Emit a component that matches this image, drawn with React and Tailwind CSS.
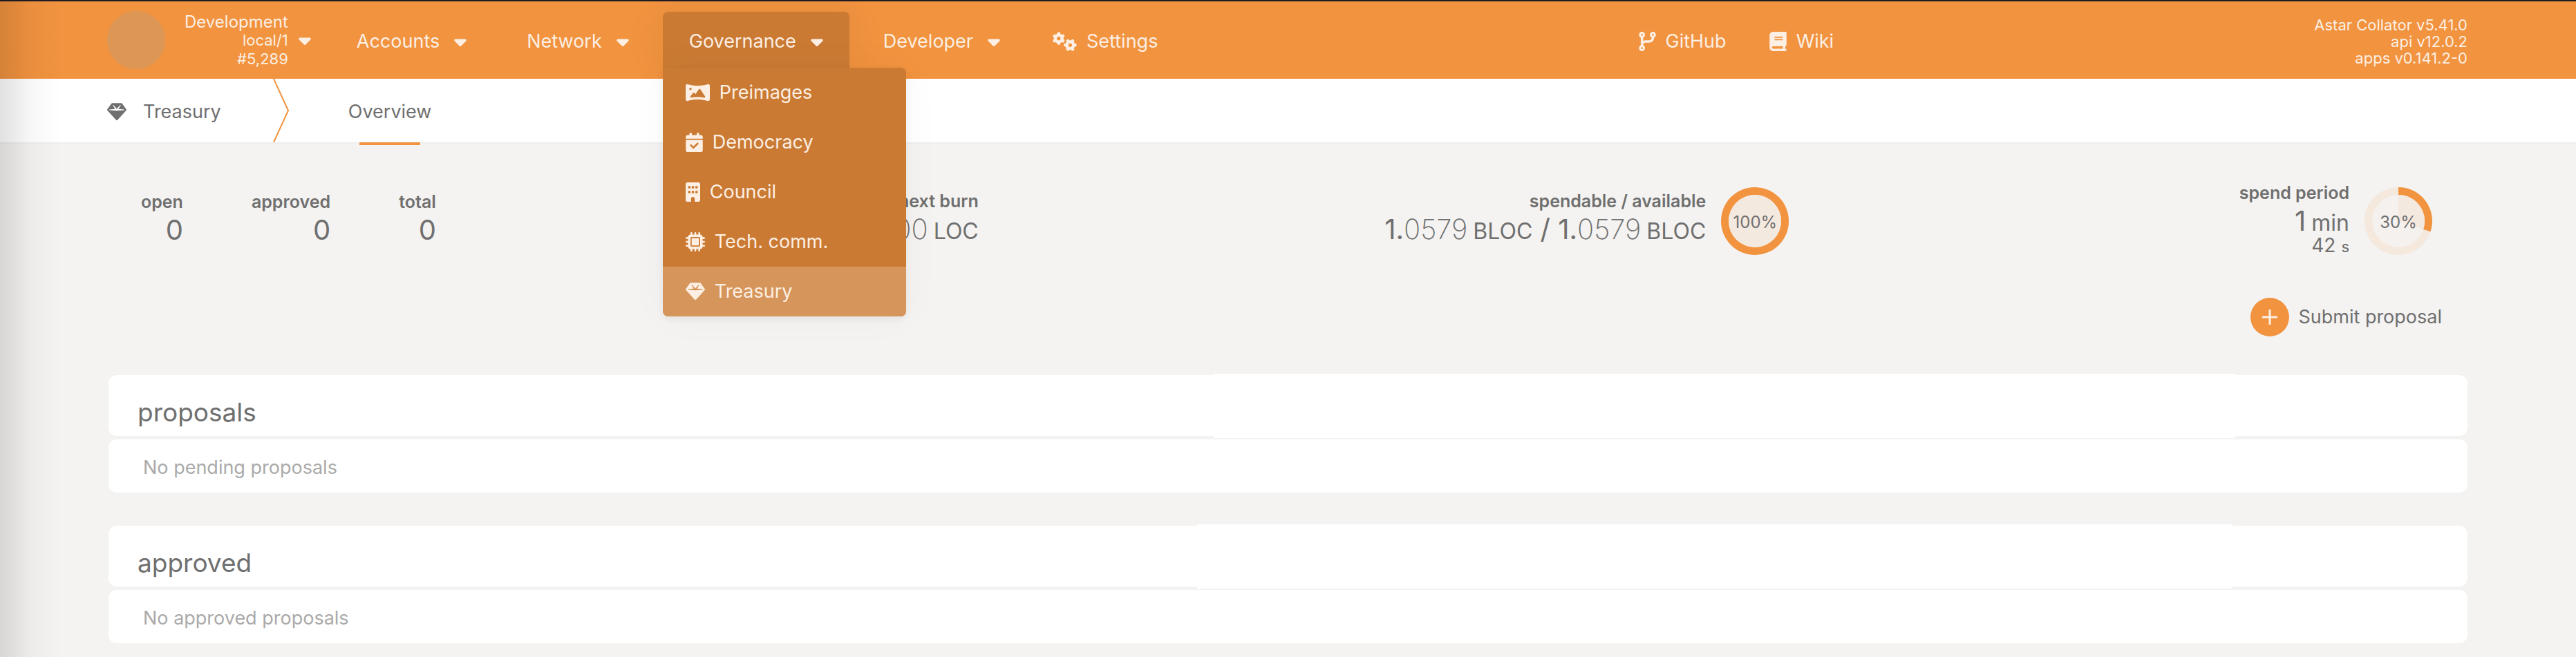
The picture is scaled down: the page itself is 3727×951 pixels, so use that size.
import React, { useState } from "react";
import {
  FaBook,
  FaBuilding,
  FaCalendarCheck,
  FaCaretDown,
  FaCodeBranch,
  FaGears,
  FaGem,
  FaMicrochip,
  FaPanorama,
} from "react-icons/fa6";

const governanceItems = [
  { name: "Preimages", Icon: FaPanorama, size: "h-7 w-[35px]" },
  { name: "Democracy", Icon: FaCalendarCheck, size: "h-7 w-[25px]" },
  { name: "Council", Icon: FaBuilding, size: "h-7 w-[21px]" },
  { name: "Tech. comm.", Icon: FaMicrochip, size: "h-7 w-7" },
  { name: "Treasury", Icon: FaGem, size: "h-7 w-7" },
];

const counts = [
  { label: "open", value: 0 },
  { label: "approved", value: 0 },
  { label: "total", value: 0 },
];

function MenuButton({ name, active, onClick }) {
  return (
    <button
      onClick={onClick}
      className={`flex h-[82px] items-center gap-[21px] rounded-t-lg px-[38px] pt-[3px] ${
        active ? "bg-[#ca7a33] shadow-[0_0_64px_rgba(0,0,0,0.06)]" : ""
      }`}
    >
      <span>{name}</span>
      <FaCaretDown className="h-7 w-[18px]" />
    </button>
  );
}

function Dropdown({ items, selected }) {
  return (
    <ul className="absolute left-0 top-[81px] z-20 w-[352px] overflow-hidden rounded-b-lg rounded-tr-lg bg-[#ca7a33] shadow-[0_0_64px_rgba(0,0,0,0.03),0_4px_12px_rgba(0,0,0,0.06)]">
      {items.map(({ name, Icon, size }) => (
        <li key={name}>
          <a
            href="#"
            className={`flex h-[72px] items-center gap-[14px] px-[33px] ${
              name === selected ? "bg-[#d5955b]" : ""
            }`}
          >
            <Icon className={size} />
            <span>{name}</span>
          </a>
        </li>
      ))}
    </ul>
  );
}

function Stat({ label, children }) {
  return (
    <div className="text-right">
      <h2 className="text-[25px] leading-[26px] font-semibold">{label}</h2>
      <div className="text-[40px] leading-[56px]">{children}</div>
    </div>
  );
}

function Balance({ whole, decimals, unit }) {
  return (
    <>
      {whole}.<span className="font-extralight">{decimals}</span>
      <span className="ml-2 text-[32px]">{unit}</span>
    </>
  );
}

// pie in the middle, ring around it, both filled to the same percentage
function Progress({ value }) {
  const angle = (value / 100) * 2 * Math.PI;
  const x = 49 + 49 * Math.sin(angle);
  const y = 49 - 49 * Math.cos(angle);
  const slice = `M49 49V0A49 49 0 ${value > 50 ? 1 : 0} 1 ${x} ${y}Z`;
  const full = value >= 100;

  return (
    <div className="relative flex h-[98px] w-[98px] items-center justify-center">
      <svg viewBox="0 0 98 98" className="absolute inset-0 h-full w-full">
        <circle cx="49" cy="49" r="49" fill="#f5e8dd" />
        {full ? (
          <circle cx="49" cy="49" r="49" fill="#f1933f" />
        ) : (
          <path d={slice} fill="#f1933f" />
        )}
        <circle cx="49" cy="49" r="38" fill="#f5f1ee" />
        {full ? (
          <circle cx="49" cy="49" r="38" fill="#f4e9df" />
        ) : (
          <g transform="translate(49 49) scale(0.776) translate(-49 -49)">
            <path d={slice} fill="#f4e9df" />
          </g>
        )}
      </svg>
      <span className="relative pt-1 text-2xl leading-7">{value}%</span>
    </div>
  );
}

function ProposalTable({ title, empty, columns }) {
  return (
    <table className="w-full table-fixed border-separate border-spacing-x-0 border-spacing-y-[5px]">
      <colgroup>
        {columns.map((width, index) => (
          <col key={index} style={{ width }} />
        ))}
      </colgroup>
      <thead>
        <tr>
          <th className="h-[88px] rounded-l-xl bg-white pt-5 pl-[42px] text-left text-[37px] leading-[48px] font-normal">
            <h1>{title}</h1>
          </th>
          <th className="bg-white shadow-[0_-2px_0_#fff,0_3px_0_#fff]" />
          <th className="rounded-r-xl bg-white" />
        </tr>
      </thead>
      <tbody>
        <tr>
          <td
            colSpan={3}
            className="h-[77px] rounded-xl bg-white pt-1 pl-[50px] leading-8 text-[#aaaaaa]"
          >
            {empty}
          </td>
        </tr>
      </tbody>
    </table>
  );
}

export default function App() {
  const [open, setOpen] = useState("Governance");

  const toggle = (name) => setOpen(open === name ? null : name);

  return (
    <div className="relative min-h-screen bg-[#f4f3f1] font-['Inter','Liberation_Sans',sans-serif] text-[27px] leading-8 text-[#6f6f6f]">
      {/* Menu bar */}
      <header className="flex h-[114px] justify-between border-t-2 border-[#1f1c22] bg-[#f1933f] px-[155px] text-[#fdefe3]">
        <div className="flex">
          <button className="flex items-center text-right">
            <span className="h-[84px] w-[84px] rounded-full bg-[#dc9757]" />
            <span className="ml-7 text-[22px] leading-[27px]">
              <span className="block text-2xl leading-[27px]">Development</span>
              <span className="block">local/1</span>
              <span className="block">#5,289</span>
            </span>
            <FaCaretDown className="ml-[15px] h-7 w-[18px]" />
          </button>
          <nav className="flex pt-[15px] pl-7">
            <ul className="flex gap-[11px]">
              {["Accounts", "Network", "Governance", "Developer"].map((name) => (
                <li key={name} className="relative">
                  <MenuButton
                    name={name}
                    active={open === name}
                    onClick={() => toggle(name)}
                  />
                  {name === "Governance" && open === name && (
                    <Dropdown items={governanceItems} selected="Treasury" />
                  )}
                </li>
              ))}
            </ul>
            <a href="#" className="flex h-[82px] items-center gap-[14px] pt-[3px] pl-[38px]">
              <FaGears className="h-7 w-[35px]" />
              Settings
            </a>
          </nav>
        </div>
        <div className="flex items-center gap-[62px] pt-[3px]">
          <a href="#" className="flex items-center gap-[14px]">
            <FaCodeBranch className="h-7 w-[25px]" />
            GitHub
          </a>
          <a href="#" className="flex items-center gap-[14px]">
            <FaBook className="h-7 w-[25px]" />
            Wiki
          </a>
        </div>
        <div className="flex flex-col justify-center pt-1 pr-[2px] text-right text-[22px] leading-6">
          <div>Astar Collator v5.41.0</div>
          <div>api v12.0.2</div>
          <div>apps v0.141.2-0</div>
        </div>
      </header>

      {/* Tabs */}
      <div className="flex h-[94px] border-b-2 border-[#eeeeee] bg-white pl-[155px]">
        <div className="flex items-center gap-6 pt-[3px]">
          <FaGem className="h-7 w-7" />
          <span>Treasury</span>
        </div>
        <svg viewBox="0 0 24 92" className="ml-[75px] h-[92px] w-6" fill="none">
          <path d="M1 0L22 46L1 92" stroke="#f1933f" strokeWidth="2" />
        </svg>
        <a href="#" className="relative ml-[85px] flex items-center pt-[3px]">
          Overview
          <span className="absolute -bottom-1 left-4 right-4 h-1 bg-[#f1933f]" />
        </a>
      </div>

      <main className="px-[157px] pt-[63px]">
        {/* Summary */}
        <div className="flex items-center justify-between pr-[51px] pl-[47px]">
          <section className="flex gap-[99px]">
            {counts.map((count) => (
              <Stat key={count.label} label={count.label}>
                {count.value}
              </Stat>
            ))}
          </section>
          <section className="mr-2">
            <Stat label="next burn">
              <Balance whole="0" decimals="0000" unit="LOC" />
            </Stat>
          </section>
          <section className="mr-18 flex items-center gap-[22px]">
            <Stat label="spendable / available">
              <Balance whole="1" decimals="0579" unit="BLOC" /> /{" "}
              <Balance whole="1" decimals="0579" unit="BLOC" />
            </Stat>
            <Progress value={100} />
          </section>
          <section className="flex h-[98px] items-center gap-[22px]">
            <Stat label="spend period">
              1<span className="ml-2 text-[32px]">min</span>
              <div className="-mt-[10px] pb-1 text-[28px] leading-7">
                42<span className="ml-2 text-[22px]">s</span>
              </div>
            </Stat>
            <Progress value={30} />
          </section>
        </div>

        <div className="mt-[62px] flex justify-end pr-[37px]">
          <button className="flex items-center gap-[13px]">
            <span className="flex h-14 w-14 items-center justify-center rounded-full bg-[#f1933f]">
              <svg viewBox="0 0 22 22" className="h-[22px] w-[22px]" fill="none">
                <path
                  d="M11 1V21M1 11H21"
                  stroke="#fdefe3"
                  strokeWidth="3"
                  strokeLinecap="round"
                />
              </svg>
            </span>
            Submit proposal
          </button>
        </div>

        <div className="flex flex-col gap-[38px] pt-[51px] pb-3">
          <ProposalTable
            title="proposals"
            empty="No pending proposals"
            columns={["46.85%", "43.3%", "9.85%"]}
          />
          <ProposalTable
            title="approved"
            empty="No approved proposals"
            columns={["46.15%", "43.9%", "9.95%"]}
          />
        </div>
      </main>

      {/* Edge shade */}
      <div className="pointer-events-none absolute inset-y-0 left-0 w-[90px] bg-linear-to-r from-black/12 via-black/3 to-transparent" />
    </div>
  );
}
